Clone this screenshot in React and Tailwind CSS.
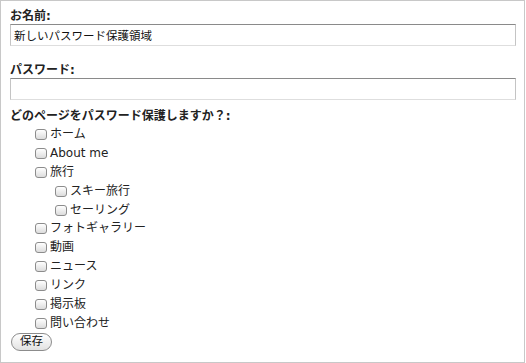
import React from "react";

const pages = [
    { label: "ホーム", level: 0 },
    { label: "About me", level: 0 },
    { label: "旅行", level: 0 },
    { label: "スキー旅行", level: 1 },
    { label: "セーリング", level: 1 },
    { label: "フォトギャラリー", level: 0 },
    { label: "動画", level: 0 },
    { label: "ニュース", level: 0 },
    { label: "リンク", level: 0 },
    { label: "掲示板", level: 0 },
    { label: "問い合わせ", level: 0 },
];

const inputClass =
    "block w-[506px] h-[22px] border border-t-[#8a8a8a] border-x-[#c4c4c4] border-b-[#dedede] bg-white px-[3px] text-[11.5px] text-[#111] outline-none";

const App = () => {
    return (
        <div className="w-[525px] h-[363px] border border-[#c8c8c8] bg-white pl-[9px] pt-[7px] text-[12px] text-[#222] font-['DejaVu_Sans','Noto_Sans_CJK_JP',sans-serif]">
            <label className="block h-[16px] leading-[16px] font-bold">お名前:</label>
            <input className={inputClass} defaultValue="新しいパスワード保護領域" />

            <label className="block mt-[16px] h-[16px] leading-[16px] font-bold">パスワード:</label>
            <input className={inputClass} type="password" />

            <p className="mt-[8px] h-[16px] leading-[16px] font-bold">どのページをパスワード保護しますか？:</p>
            <ul className="mt-[1px]">
                {pages.map((page) => (
                    <li
                        key={page.label}
                        className={`flex items-center h-[18.9px] gap-[3px] ${page.level ? "pl-[45px]" : "pl-[25px]"}`}
                    >
                        <span className="w-[12px] h-[11px] rounded-[3px] border border-[#8c8c8c] bg-gradient-to-b from-white to-[#dcdcdc]" />
                        <span className="leading-[19px]">{page.label}</span>
                    </li>
                ))}
            </ul>
            <button className="ml-[1px] flex items-center justify-center w-[41px] h-[18px] rounded-full border border-[#8c8c8c] bg-gradient-to-b from-white to-[#e2e2e2] text-[11.5px] text-[#111] leading-none">
                保存
            </button>
        </div>
    );
};

export default App;
